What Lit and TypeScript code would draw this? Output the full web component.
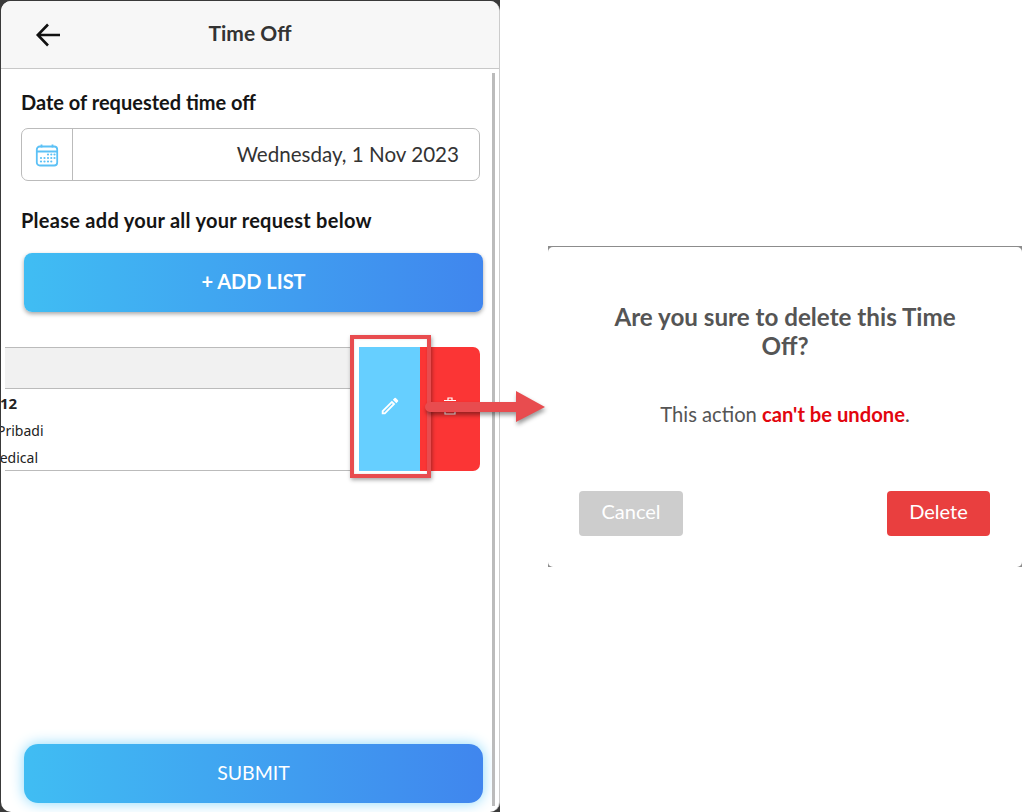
import { LitElement, html, css } from "lit";
import { customElement } from "lit/decorators.js";

@customElement("app-root")
export class AppRoot extends LitElement {
  static styles = css`
    :host { display: flex; position: relative; width: 1022px; height: 812px; overflow: hidden; background: #fff; font-family: "Lato", "Noto Sans", sans-serif; color: #222; }
    * { box-sizing: border-box; }
    .phone { width: 500px; height: 812px; background: #3a3a3a; padding: 1px 0 0 1px; flex: none; }
    .screen { position: relative; height: 811px; background: #fff; border-radius: 10px; border-right: 1px solid #ccc; display: flex; flex-direction: column; overflow: hidden; }
    .head { height: 68px; flex: none; background: #f7f7f7; border-bottom: 1px solid #c8c8c8; display: flex; align-items: center; justify-content: center; position: relative; }
    .head h1 { margin: 0 0 4px; font-size: 21px; font-weight: 700; color: #333; }
    .back { position: absolute; left: 34px; top: 21px; }
    .body { flex: 1; display: flex; flex-direction: column; padding: 21px 0 9px 0; }
    .label { margin: 0 0 0 20px; font-size: 20px; line-height: 24px; font-weight: 700; color: #151515; }
    .date { margin: 14px 0 0 20px; width: 459px; height: 53px; border: 1px solid #bbb; border-radius: 7px; display: flex; align-items: center; }
    .cal { width: 51px; height: 100%; border-right: 1px solid #bbb; display: flex; align-items: center; justify-content: center; flex: none; }
    .date span { flex: 1; text-align: right; padding: 0 20px 2px 0; font-size: 20.6px; color: #333; }
    .second { margin-top: 27px; letter-spacing: .27px; }
    .btn { margin-left: 23px; width: 459px; height: 59px; flex: none; background: linear-gradient(90deg, #40bdf3, #4086ee); color: #fff; display: flex; align-items: center; justify-content: center; padding-bottom: 3px; }
    .add { margin-top: 21px; border-radius: 8px; font-size: 20px; font-weight: 700; box-shadow: 0 2px 4px rgba(0,0,0,.35); }
    .submit { margin-top: auto; border-radius: 14px; font-size: 19.5px; box-shadow: 0 0 14px #8ad9fb; }
    .row { margin: 35px 19px 0 4px; height: 124px; display: flex; flex: none; }
    .main { width: 349px; border-bottom: 1px solid #bbb; height: 124px; }
    .rowhead { height: 42px; background: #f1f1f1; border-top: 1px solid #bbb; border-bottom: 1px solid #bbb; }
    .gap { width: 5px; }
    .lines { margin-left: -5px; font-family: "Noto Sans", sans-serif; color: #222; }
    .lines div { height: 27px; font-size: 14px; line-height: 27px; white-space: nowrap; }
    .lines .n { font-weight: 700; font-size: 15px; margin-top: 1px; }
    .lines .p { margin-left: -3px; }
    .lines .m { margin-left: -13px; }
    .edit { width: 61px; background: #66cfff; display: flex; align-items: center; justify-content: center; padding-bottom: 6px; }
    .del { width: 60px; background: #fb3535; border-radius: 0 7px 7px 0; display: flex; align-items: center; justify-content: center; padding-bottom: 6px; }
    .scroll { position: absolute; left: 491px; top: 72px; width: 3px; height: 733px; background: #bbb; }
    .right { flex: 1; padding: 246px 0 0 48px; }
    .dlgframe { height: 321px; background: #8c8c8c; padding-top: 1px; }
    .dlg { height: 320px; background: #fff; border-radius: 5px; display: flex; flex-direction: column; align-items: center; }
    .dlg h2 { margin: 55px 0 0; width: 350px; text-align: center; font-size: 24.2px; line-height: 29px; font-weight: 700; color: #555; }
    .dlg p { margin: 41px 0 0; font-size: 20.2px; line-height: 26px; color: #555; }
    .dlg b { color: #e2060f; }
    .acts { margin: 64px 0 0 31px; width: 411px; display: flex; justify-content: space-between; align-self: flex-start; }
    .acts div { height: 45px; border-radius: 4px; color: #fff; font-size: 20px; display: flex; align-items: center; justify-content: center; padding-bottom: 5px; }
    .cancel { width: 104px; background: #cdcdcd; }
    .delete { width: 103px; background: #e93f3f; }
    .box { position: absolute; left: 350px; top: 335px; width: 81px; height: 143px; border: 4px solid #e84c4f; box-shadow: 1px 2px 4px rgba(0,0,0,.35), inset 0 0 2px rgba(0,0,0,.15); }
    .arrow { position: absolute; left: 421px; top: 385px; filter: drop-shadow(1px 3px 2px rgba(0,0,0,.4)); }
  `;

  render() {
    return html`
      <div class="phone">
        <div class="screen">
          <div class="head">
            <svg class="back" width="26" height="26" viewBox="0 0 26 26" fill="none" stroke="#111" stroke-width="2.6"><path d="M25 13H3M13 2.5 2.8 13 13 23.5"/></svg>
            <h1>Time Off</h1>
          </div>
          <div class="body">
            <p class="label">Date of requested time off</p>
            <div class="date">
              <div class="cal">
                <svg width="24" height="24" viewBox="0 0 24 24" fill="none" stroke="#5cc1f6" stroke-width="1.8"><rect x="1.8" y="3.5" width="20.4" height="19" rx="3"/><path d="M2 8.5h20M6.5 1.5v3M17.5 1.5v3"/><g fill="#5cc1f6" stroke="none"><circle cx="13" cy="11.5" r="1.1"/><circle cx="16.3" cy="11.5" r="1.1"/><circle cx="19.5" cy="11.5" r="1.1"/><circle cx="6" cy="15" r="1.1"/><circle cx="9.5" cy="15" r="1.1"/><circle cx="13" cy="15" r="1.1"/><circle cx="16.3" cy="15" r="1.1"/><circle cx="19.5" cy="15" r="1.1"/><circle cx="6" cy="18.5" r="1.1"/><circle cx="9.5" cy="18.5" r="1.1"/><circle cx="13" cy="18.5" r="1.1"/><circle cx="16.3" cy="18.5" r="1.1"/></g></svg>
              </div>
              <span>Wednesday, 1 Nov 2023</span>
            </div>
            <p class="label second">Please add your all your request below</p>
            <div class="btn add">+ ADD LIST</div>
            <div class="row">
              <div class="main">
                <div class="rowhead"></div>
                <div class="lines">
                  <div class="n">12</div>
                  <div class="p">Pribadi</div>
                  <div class="m">Medical</div>
                </div>
              </div>
              <div class="gap"></div>
              <div class="edit">
                <svg width="22" height="22" viewBox="0 0 24 24" fill="#fff"><path d="M3 17.25V21h3.75L17.81 9.94l-3.75-3.75L3 17.25zM5.92 19H5v-.92l9.06-9.06.92.92L5.92 19zM20.71 7.04a1 1 0 0 0 0-1.41l-2.34-2.34a1 1 0 0 0-1.41 0l-1.83 1.83 3.75 3.75 1.83-1.83z"/></svg>
              </div>
              <div class="del">
                <svg width="16" height="20" viewBox="0 0 16 20" fill="none" stroke="#fff" stroke-width="1.2"><path d="M3 7h10v11H3zM6 10v5M8 10v5M10 10v5M2 4.5h12M6 4V2h4v2"/></svg>
              </div>
            </div>
            <div class="btn submit">SUBMIT</div>
          </div>
          <div class="scroll"></div>
        </div>
      </div>
      <div class="right">
        <div class="dlgframe">
          <div class="dlg">
            <h2>Are you sure to delete this Time Off?</h2>
            <p>This action <b>can't be undone</b>.</p>
            <div class="acts">
              <div class="cancel">Cancel</div>
              <div class="delete">Delete</div>
            </div>
          </div>
        </div>
      </div>
      <div class="box"></div>
      <svg class="arrow" width="130" height="44" viewBox="0 0 130 44"><path d="M9 17H95V6l29 16-29 15V27H9a5 5 0 0 1 0-10z" fill="#e84c4f"/></svg>
    `;
  }
}
